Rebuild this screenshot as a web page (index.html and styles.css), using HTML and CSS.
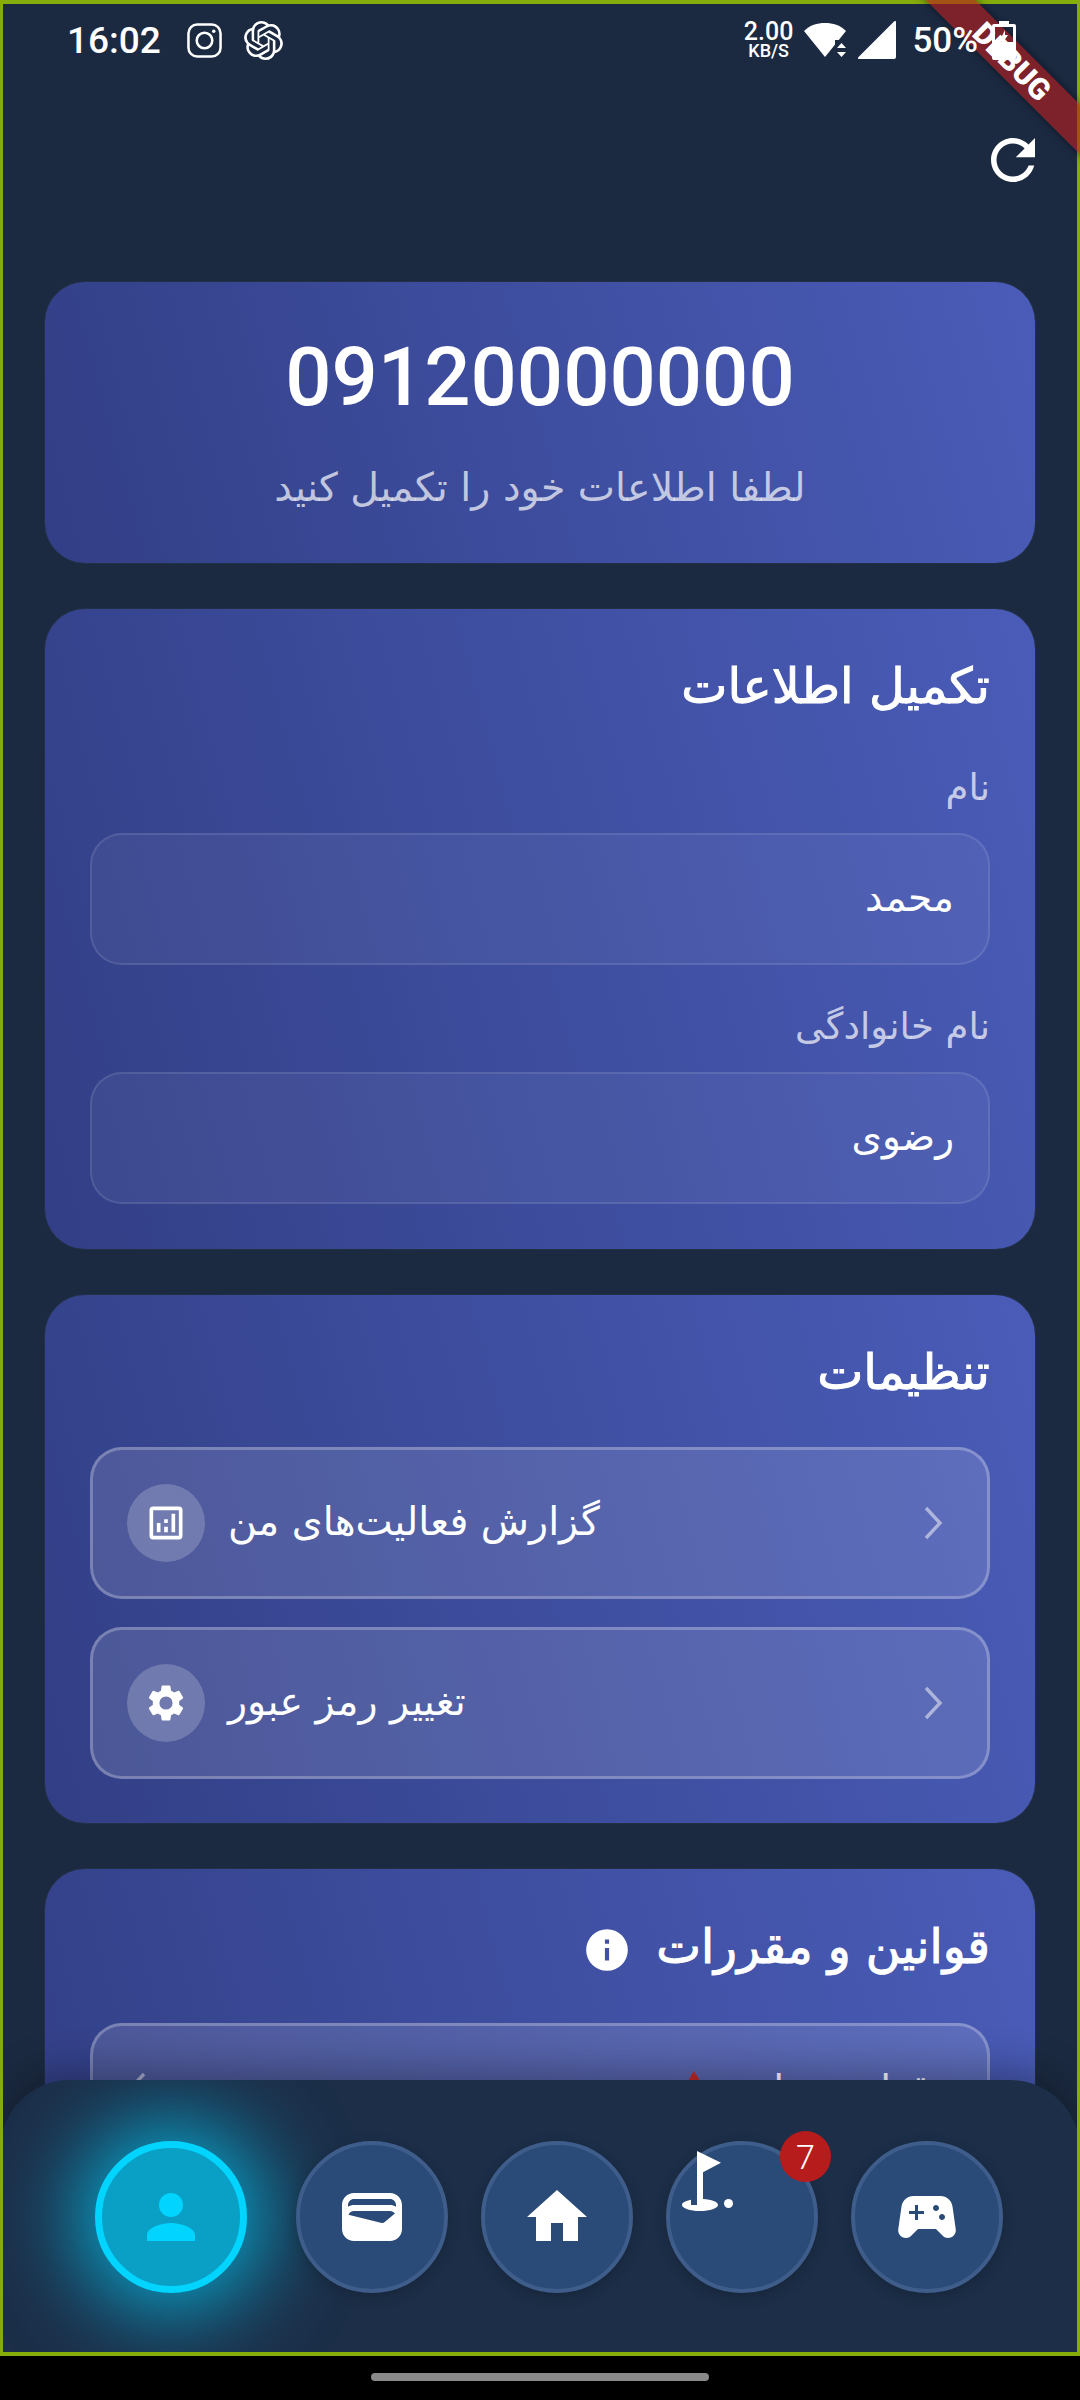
FILE: index.html
```html
<!DOCTYPE html>
<html lang="fa">
<head>
    <meta charset="UTF-8">
    <title>Profile</title>
    <link rel="stylesheet" href="styles.css">
</head>
<body>
    <div class="screen">
        <div class="status-bar">
            <div class="status-left">
                <span class="clock">16:02</span>
                <svg class="status-insta" viewBox="0 0 36 36" fill="none" stroke="#fff" stroke-width="2.6">
                    <rect x="1.5" y="1.5" width="33" height="33" rx="9"/>
                    <circle cx="18" cy="18" r="8"/>
                    <circle cx="27.5" cy="8.5" r="1.8" fill="#fff" stroke="none"/>
                </svg>
                <svg class="status-gpt" viewBox="0 0 24 24"><path d="M22.2819 9.8211a5.9847 5.9847 0 0 0-.5157-4.9108 6.0462 6.0462 0 0 0-6.5098-2.9A6.0651 6.0651 0 0 0 4.9807 4.1818a5.9847 5.9847 0 0 0-3.9977 2.9 6.0462 6.0462 0 0 0 .7427 7.0966 5.98 5.98 0 0 0 .511 4.9107 6.051 6.051 0 0 0 6.5146 2.9001A5.9847 5.9847 0 0 0 13.2599 24a6.0557 6.0557 0 0 0 5.7718-4.2058 5.9894 5.9894 0 0 0 3.9977-2.9001 6.0557 6.0557 0 0 0-.7475-7.0729zm-9.022 12.6081a4.4755 4.4755 0 0 1-2.8764-1.0408l.1419-.0804 4.7783-2.7582a.7948.7948 0 0 0 .3927-.6813v-6.7369l2.02 1.1686a.071.071 0 0 1 .038.052v5.5826a4.504 4.504 0 0 1-4.4945 4.4944zm-9.6607-4.1254a4.4708 4.4708 0 0 1-.5346-3.0137l.142.0852 4.783 2.7582a.7712.7712 0 0 0 .7806 0l5.8428-3.3685v2.3324a.0804.0804 0 0 1-.0332.0615L9.74 19.9502a4.4992 4.4992 0 0 1-6.1408-1.6464zM2.3408 7.8956a4.485 4.485 0 0 1 2.3655-1.9728V11.6a.7664.7664 0 0 0 .3879.6765l5.8144 3.3543-2.0201 1.1685a.0757.0757 0 0 1-.071 0l-4.8303-2.7865A4.504 4.504 0 0 1 2.3408 7.872zm16.5963 3.8558L13.1038 8.364 15.1192 7.2a.0757.0757 0 0 1 .071 0l4.8303 2.7913a4.4944 4.4944 0 0 1-.6765 8.1042v-5.6772a.79.79 0 0 0-.407-.667zm2.0107-3.0231l-.142-.0852-4.7735-2.7818a.7759.7759 0 0 0-.7854 0L9.409 9.2297V6.8974a.0662.0662 0 0 1 .0284-.0615l4.8303-2.7866a4.4992 4.4992 0 0 1 6.6802 4.66zM8.3065 12.863l-2.02-1.1638a.0804.0804 0 0 1-.038-.0567V6.0742a4.4992 4.4992 0 0 1 7.3757-3.4537l-.142.0805L8.704 5.459a.7948.7948 0 0 0-.3927.6813zm1.0976-2.3654l2.602-1.4998 2.6069 1.4998v2.9994l-2.5974 1.4997-2.6067-1.4997Z" fill="#fff"/></svg>
            </div>
            <div class="status-right">
                <div class="net-speed"><span>2.00</span><span class="net-unit">KB/S</span></div>
                <svg class="status-wifi" viewBox="0 0 42 34"><path d="M0 8C6 2 13 0 21 0s15 2 21 8L21 34z" fill="#fff"/><path d="M31 17l11 0v17H31z" fill="#1b2a41"/><path d="M37.5 20l4.5 5h-9zM37.5 34l4.5-5h-9z" fill="#fff"/></svg>
                <svg class="status-signal" viewBox="0 0 38 38"><path d="M38 1v35a2 2 0 0 1-2 2H1a1 1 0 0 1-.7-1.7L36.300.3A1 1 0 0 1 38 1z" fill="#fff"/></svg>
                <span class="battery-pct">50%</span>
                <svg class="status-battery" viewBox="0 0 24 39"><path d="M7 0h10v3h5a2 2 0 0 1 2 2v32a2 2 0 0 1-2 2H2a2 2 0 0 1-2-2V5a2 2 0 0 1 2-2h5zM3 6v15h18V6z" fill="#fff" fill-rule="evenodd"/><path d="M13 9l-4 8h3v3l4-6h-3z" fill="#fff"/></svg>
            </div>
        </div>

        <div class="top-actions">
            <svg class="refresh" viewBox="0 0 24 24"><path d="M17.65 6.35C16.2 4.9 14.21 4 12 4c-4.42 0-7.99 3.58-7.99 8s3.57 8 7.99 8c3.73 0 6.84-2.55 7.73-6h-2.08c-.82 2.33-3.04 4-5.65 4-3.31 0-6-2.69-6-6s2.69-6 6-6c1.66 0 3.14.69 4.22 1.78L13 11h7V4l-2.35 2.35z" fill="#fff"/></svg>
        </div>

        <div class="content">
            <section class="card card-head">
                <div class="phone">09120000000</div>
                <div class="subtitle">لطفا اطلاعات خود را تکمیل کنید</div>
            </section>

            <section class="card card-form">
                <h2 class="card-title">تکمیل اطلاعات</h2>
                <div class="field-label">نام</div>
                <div class="field">محمد</div>
                <div class="field-label field-label-next">نام خانوادگی</div>
                <div class="field">رضوی</div>
            </section>

            <section class="card card-settings">
                <h2 class="card-title">تنظیمات</h2>
                <div class="row-list">
                    <div class="row">
                        <div class="row-icon">
                            <svg viewBox="0 0 24 24"><path d="M19 3H5a2 2 0 0 0-2 2v14a2 2 0 0 0 2 2h14a2 2 0 0 0 2-2V5a2 2 0 0 0-2-2zm0 16H5V5h14zM7 12h2v5H7zm8-5h2v10h-2zm-4 7h2v3h-2zm0-4h2v2h-2z" fill="#fff"/></svg>
                        </div>
                        <div class="row-text">گزارش فعالیت‌های من</div>
                        <svg class="chevron" viewBox="0 0 20 34"><path d="M3 2l14 15L3 32" fill="none" stroke="currentColor" stroke-width="3.4"/></svg>
                    </div>
                    <div class="row">
                        <div class="row-icon">
                            <svg viewBox="0 0 24 24"><path d="M19.14 12.94c.04-.3.06-.61.06-.94s-.02-.64-.07-.94l2.03-1.58a.49.49 0 0 0 .12-.61l-1.92-3.32a.49.49 0 0 0-.59-.22l-2.39.96a7 7 0 0 0-1.62-.94l-.36-2.54a.48.48 0 0 0-.48-.41h-3.84a.47.47 0 0 0-.47.41l-.36 2.54c-.59.24-1.13.57-1.62.94l-2.39-.96a.48.48 0 0 0-.59.22L2.74 8.87a.48.48 0 0 0 .12.61l2.03 1.58c-.05.3-.09.63-.09.94s.02.64.07.94l-2.03 1.58a.49.49 0 0 0-.12.61l1.92 3.32c.12.22.37.29.59.22l2.39-.96c.5.38 1.03.7 1.62.94l.36 2.54c.05.24.24.41.48.41h3.84c.24 0 .44-.17.47-.41l.36-2.54a7 7 0 0 0 1.62-.94l2.39.96c.22.08.47 0 .59-.22l1.92-3.32a.48.48 0 0 0-.12-.61zM12 15.6a3.6 3.6 0 1 1 0-7.2 3.6 3.6 0 0 1 0 7.2z" fill="#fff"/></svg>
                        </div>
                        <div class="row-text">تغییر رمز عبور</div>
                        <svg class="chevron" viewBox="0 0 20 34"><path d="M3 2l14 15L3 32" fill="none" stroke="currentColor" stroke-width="3.4"/></svg>
                    </div>
                </div>
            </section>

            <section class="card card-rules">
                <h2 class="card-title card-title-icon">
                    <span>قوانین و مقررات</span>
                    <svg viewBox="0 0 24 24"><path d="M12 2a10 10 0 1 0 0 20 10 10 0 0 0 0-20zm1 15h-2v-6h2zm0-8h-2V7h2z" fill="#fff"/></svg>
                </h2>
                <div class="rules-row">
                    <div class="rules-text">قوانین تقلب</div>
                    <svg class="rules-warn" viewBox="0 0 24 24"><path d="M1 21h22L12 2z" fill="#c62828"/></svg>
                    <svg class="rules-chevron" viewBox="0 0 20 34"><path d="M17 2L3 17l14 15" fill="none" stroke="currentColor" stroke-width="3.4"/></svg>
                </div>
            </section>
        </div>

        <nav class="bottom-nav">
            <div class="nav-btn nav-btn-active">
                <svg viewBox="0 0 24 24"><path d="M12 12c2.21 0 4-1.79 4-4s-1.79-4-4-4-4 1.79-4 4 1.790 4 4 4zm0 2c-2.670 0-8 1.340-8 4v2h16v-2c0-2.660-5.330-4-8-4z" fill="#00d4ff"/></svg>
            </div>
            <div class="nav-btn">
                <svg viewBox="0 0 24 24"><path d="M18 4H6C3.790 4 2 5.790 2 8v8c0 2.210 1.790 4 4 4h12c2.210 0 4-1.790 4-4V8c0-2.210-1.790-4-4-4zm-1.860 9.770c-.240.200-.570.280-.880.200L4.150 11.250C4.450 10.520 5.160 10 6 10h12c.670 0 1.260.340 1.630.840l-3.490 2.930zM6 6h12c1.100 0 2 .900 2 2v.550c-.590-.340-1.270-.550-2-.550H6c-.730 0-1.410.210-2 .550V8c0-1.100.900-2 2-2z" fill="#fff"/></svg>
            </div>
            <div class="nav-btn">
                <svg viewBox="0 0 24 24"><path d="M10 20v-6h4v6h5v-8h3L12 3 2 12h3v8z" fill="#fff"/></svg>
            </div>
            <div class="nav-btn">
                <svg class="nav-golf" viewBox="0 0 24 24"><circle cx="19.500" cy="19.500" r="1.500" fill="#fff"/><path d="M17 5.920L9 2v18H7v-1.730c-1.790.350-3 .990-3 1.730 0 1.100 2.690 2 6 2s6-.900 6-2c0-.990-2.160-1.810-5-1.970V9.090l6-3.170z" fill="#fff"/></svg>
                <span class="nav-badge">7</span>
            </div>
            <div class="nav-btn">
                <svg viewBox="0 0 24 24"><path d="M21.580 16.090l-1.090-7.660C20.210 6.460 18.520 5 16.530 5H7.470C5.480 5 3.790 6.460 3.510 8.430l-1.090 7.660C2.200 17.630 3.390 19 4.940 19c.680 0 1.320-.270 1.800-.750L9 16h6l2.250 2.250c.480.480 1.130.750 1.800.750 1.560 0 2.750-1.370 2.530-2.910zM11 11H9v2H8v-2H6v-1h2V8h1v2h2v1zm4-1c-.550 0-1-.450-1-1s.450-1 1-1 1 .450 1 1-.450 1-1 1zm2 3c-.550 0-1-.450-1-1s.450-1 1-1 1 .450 1 1-.450 1-1 1z" fill="#fff"/></svg>
            </div>
        </nav>

        <div class="debug-banner"><span>DEBUG</span></div>
    </div>
    <div class="gesture-area"><div class="gesture-pill"></div></div>
</body>
</html>
```
FILE: styles.css
```css
:root {
    --bg-color: #1b2a41;
    --nav-bg: #1c2e48;
    --frame-color: #86ac0c;
    --text-muted: rgba(255, 255, 255, 0.7);
    --cyan: #00d4ff;
}

* {
    margin: 0;
    padding: 0;
    box-sizing: border-box;
}

body {
    width: 1080px;
    height: 2400px;
    overflow: hidden;
    background: #000;
    font-family: "DejaVu Sans", sans-serif;
    color: #fff;
}

.screen {
    position: relative;
    height: 2356px;
    overflow: hidden;
    background: var(--bg-color);
}

/* debug frame sits on top of everything but the banner */
.screen::after {
    content: "";
    position: absolute;
    inset: 0;
    z-index: 2;
    border: solid var(--frame-color);
    border-width: 4px 3px;
    pointer-events: none;
}

.status-bar {
    position: relative;
    z-index: 4;
    display: flex;
    justify-content: space-between;
    align-items: center;
    height: 80px;
    padding: 0 64px 0 67px;
}

.status-left,
.status-right {
    display: flex;
    align-items: center;
}

.clock {
    font-family: Roboto, sans-serif;
    font-size: 37px;
    font-weight: 500;
    margin-right: 26px;
}

.status-insta {
    width: 35px;
    height: 35px;
    margin-right: 22px;
}

.status-gpt {
    width: 39px;
    height: 39px;
}

.net-speed {
    display: flex;
    flex-direction: column;
    align-items: center;
    font-family: Roboto, sans-serif;
    font-size: 25px;
    line-height: 20px;
    font-weight: 500;
    margin-right: 11px;
}

.net-unit {
    font-size: 18px;
    line-height: 17px;
}

.status-wifi {
    width: 42px;
    height: 34px;
    margin-right: 12px;
}

.status-signal {
    width: 38px;
    height: 38px;
    margin-right: 16px;
}

.battery-pct {
    font-family: Roboto, sans-serif;
    font-size: 35px;
    font-weight: 500;
    margin-right: 14px;
}

.status-battery {
    width: 24px;
    height: 39px;
}

.top-actions {
    display: flex;
    justify-content: flex-end;
    padding: 47px 34px 0 0;
}

.refresh {
    width: 66px;
    height: 66px;
}

.content {
    display: flex;
    flex-direction: column;
    gap: 46px;
    padding: 89px 45px 0;
}

.card {
    direction: rtl;
    border-radius: 40px;
    padding: 47px 45px;
    background: linear-gradient(75deg, #323f86, #4a5cb8);
    box-shadow: 0 0 0 1px rgba(255, 255, 255, 0.03);
}

.card-head {
    height: 281px;
    text-align: center;
    padding: 49px 20px 0;
}

.phone {
    direction: ltr;
    font-family: Roboto, sans-serif;
    font-size: 81.5px;
    line-height: 92px;
    font-weight: 500;
}

.subtitle {
    margin-top: 39px;
    font-size: 39.5px;
    line-height: 50px;
    color: var(--text-muted);
}

.card-form {
    height: 640px;
}

.card-settings {
    height: 528px;
}

.card-rules {
    height: 500px;
    padding-top: 47px;
}

.card-title {
    font-size: 49px;
    line-height: 62px;
    font-weight: 400;
    -webkit-text-stroke: 1px #fff;
}

.card-title-icon {
    display: flex;
    align-items: center;
    gap: 24px;
    font-size: 47.5px;
}

.card-title-icon span {
    padding-bottom: 5px;
}

.card-title-icon svg {
    width: 50px;
    height: 50px;
}

.field-label {
    margin-top: 45px;
    font-size: 37px;
    line-height: 50px;
    color: var(--text-muted);
}

.field-label-next {
    margin-top: 37px;
}

.field {
    display: flex;
    align-items: center;
    height: 132px;
    margin-top: 20px;
    padding: 0 34px 3px;
    font-size: 39px;
    border-radius: 32px;
    background: rgba(255, 255, 255, 0.05);
    border: 2px solid rgba(255, 255, 255, 0.1);
}

.row-list {
    display: flex;
    flex-direction: column;
    gap: 28px;
    margin-top: 43px;
}

.row {
    direction: ltr;
    display: flex;
    align-items: center;
    height: 152px;
    padding: 0 44px 0 34px;
    border-radius: 32px;
    background: rgba(255, 255, 255, 0.12);
    border: 3px solid rgba(255, 255, 255, 0.25);
}

.chevron {
    width: 20px;
    height: 34px;
    color: rgba(255, 255, 255, 0.5);
    margin-left: auto;
}

.row-icon {
    display: flex;
    align-items: center;
    justify-content: center;
    flex-shrink: 0;
    width: 78px;
    height: 78px;
    border-radius: 50%;
    background: rgba(255, 255, 255, 0.2);
}

.row-icon svg {
    width: 44px;
    height: 44px;
}

.row-text {
    direction: rtl;
    font-size: 39.5px;
    margin-left: 23px;
    padding-bottom: 4px;
}

.rules-row {
    display: flex;
    align-items: center;
    height: 132px;
    margin-top: 40px;
    padding: 0 57px 0 34px;
    border-radius: 32px;
    background: rgba(255, 255, 255, 0.12);
    border: 3px solid rgba(255, 255, 255, 0.25);
}

.rules-text {
    width: 214px;
    font-size: 39px;
    white-space: nowrap;
}

.rules-warn {
    width: 44px;
    height: 44px;
}

.rules-chevron {
    width: 20px;
    height: 34px;
    color: rgba(255, 255, 255, 0.5);
    margin-right: auto;
}

.bottom-nav {
    position: absolute;
    left: 0;
    right: 0;
    bottom: 0;
    display: flex;
    align-items: center;
    gap: 33px;
    height: 276px;
    padding: 0 0 2px 95px;
    overflow: hidden;
    background: var(--nav-bg);
    border-radius: 70px 70px 0 0;
    box-shadow: 0 -10px 40px rgba(0, 0, 0, 0.3);
}

.nav-btn {
    position: relative;
    display: flex;
    align-items: center;
    justify-content: center;
    flex-shrink: 0;
    width: 152px;
    height: 152px;
    border-radius: 50%;
    background: #2a4a78;
    border: 4px solid #3f5d8a;
    box-shadow: 0 4px 14px rgba(0, 0, 0, 0.2);
}

.nav-btn svg {
    width: 72px;
    height: 72px;
}

.nav-btn-active {
    margin-right: 16px;
    background: #0aa0c5;
    border: 7px solid var(--cyan);
    box-shadow: 0 0 90px 16px rgba(0, 212, 255, 0.8);
}

.nav-golf {
    position: absolute;
    left: 0;
    top: 0;
}

.nav-badge {
    position: absolute;
    top: -14px;
    right: -17px;
    display: flex;
    align-items: center;
    justify-content: center;
    width: 51px;
    height: 51px;
    border-radius: 50%;
    font-family: Roboto, sans-serif;
    font-size: 34px;
    font-weight: 300;
    background: #b71c1c;
}

.debug-banner {
    position: absolute;
    z-index: 3;
    top: 44px;
    right: -82px;
    width: 300px;
    height: 35px;
    display: flex;
    align-items: center;
    justify-content: center;
    transform: rotate(45deg);
    background: rgba(183, 28, 28, 0.627);
    box-shadow: 0 0 8px rgba(0, 0, 0, 0.5);
    font-family: Roboto, sans-serif;
    font-size: 30px;
    font-weight: 900;
}

.gesture-area {
    display: flex;
    justify-content: center;
    padding-top: 17px;
}

.gesture-pill {
    width: 338px;
    height: 8px;
    border-radius: 4px;
    background: #8a8a8a;
}
```
